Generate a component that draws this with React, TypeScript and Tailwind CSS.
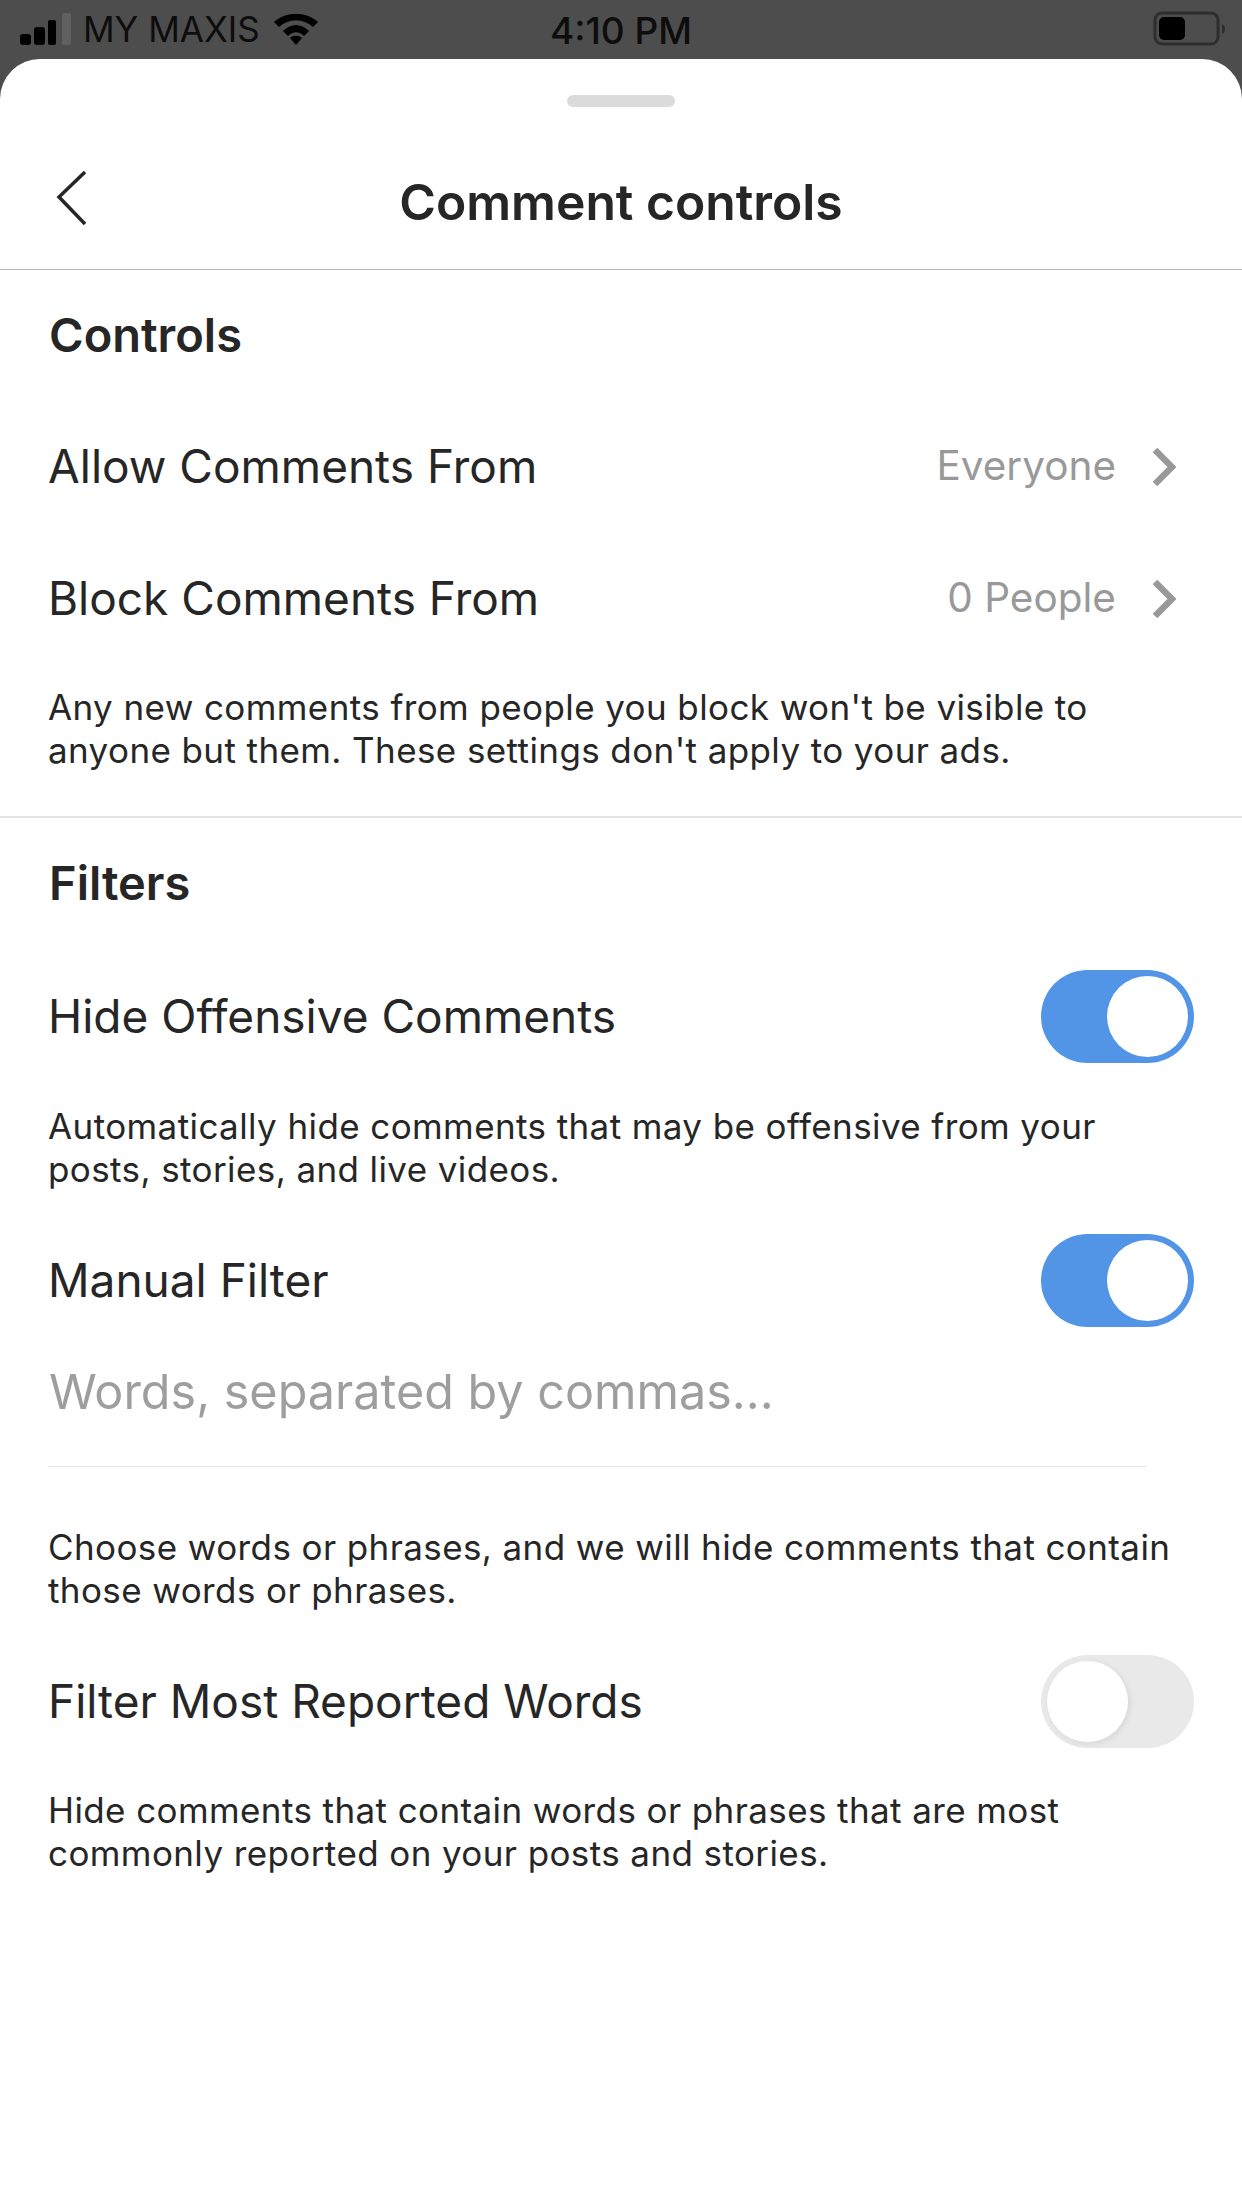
import React from "react";

const font = { fontFamily: "Inter, 'Noto Sans', sans-serif" };

const Toggle = ({ on }: { on: boolean }) => (
  <div
    className={`flex h-[93px] w-[153px] shrink-0 items-center rounded-full p-[6px] ${
      on ? "justify-end bg-[#5294e6]" : "justify-start bg-[#e9e9e9]"
    }`}
  >
    <div className={`h-[81px] w-[81px] rounded-full bg-white ${on ? "" : "shadow-[2px_2px_6px_rgba(0,0,0,0.08)]"}`} />
  </div>
);

const Chevron = () => (
  <svg width="24" height="40" viewBox="0 0 24 40" className="mt-[2px] ml-[36px] shrink-0">
    <path d="M3 3 L20 20 L3 37" fill="none" stroke="#999999" strokeWidth="6.5" />
  </svg>
);

const Help = ({ children, className = "" }: { children: React.ReactNode; className?: string }) => (
  <p className={`px-[48px] text-[35px] leading-[43px] tracking-[0.4px] text-[#262626] ${className}`}>{children}</p>
);

const Heading = ({ children, className = "" }: { children: React.ReactNode; className?: string }) => (
  <h2 className={`px-[49px] text-[47px] leading-[56px] font-semibold text-[#262626] ${className}`}>{children}</h2>
);

const LinkRow = ({ label, value, className = "" }: { label: string; value: string; className?: string }) => (
  <div className={`flex h-[60px] items-center justify-between pr-[66px] pl-[48px] ${className}`}>
    <span className="text-[46px] text-[#262626]">{label}</span>
    <span className="flex items-center">
      <span className="text-[40.5px] text-[#999999]">{value}</span>
      <Chevron />
    </span>
  </div>
);

const ToggleRow = ({ label, on, className = "" }: { label: string; on: boolean; className?: string }) => (
  <div className={`flex h-[93px] items-center justify-between pr-[48px] pl-[48px] ${className}`}>
    <span className="text-[46px] text-[#262626]">{label}</span>
    <Toggle on={on} />
  </div>
);

export default function App() {
  return (
    <div className="flex h-[2207px] w-[1242px] flex-col overflow-hidden bg-[#4d4d4d]" style={font}>
      {/* status bar */}
      <div className="relative flex h-[59px] shrink-0 items-center pl-[20px] text-[#0d0d0d]">
        <svg width="52" height="32" viewBox="0 0 52 32" className="mt-[-1px]">
          <rect x="0" y="21" width="11" height="11" rx="3" fill="#000" />
          <rect x="14" y="14" width="11" height="18" rx="3" fill="#000" />
          <rect x="28" y="7" width="8" height="25" rx="2" fill="#000" />
          <rect x="42" y="0" width="9" height="32" rx="2" fill="#606060" />
        </svg>
        <span className="ml-[11px] text-[35px] leading-none font-normal">MY MAXIS</span>
        <svg width="46" height="34" viewBox="0 0 46 34" className="mt-[-3px] ml-[13px]">
          <path d="M1 11 C13 0 33 0 45 11 L40 16 C30 7 16 7 6 16 Z" fill="#000" />
          <path d="M10 20 C18 12 28 12 36 20 L31 25 C26 20 20 20 15 25 Z" fill="#000" />
          <path d="M17 27 C20 24 26 24 29 27 L23 34 Z" fill="#000" />
        </svg>
        <span className="absolute top-[12px] left-[550px] text-[37px] leading-none font-medium">4:10 PM</span>
        <svg width="76" height="36" viewBox="0 0 76 36" className="absolute top-[11px] left-[1153px]">
          <rect x="2" y="2" width="63" height="31" rx="7" fill="none" stroke="#2e2e2e" strokeWidth="3" />
          <rect x="6" y="6" width="26" height="23" rx="5" fill="#000" />
          <path d="M69 13 C73 14 73 22 69 23 Z" fill="#2e2e2e" />
        </svg>
      </div>

      {/* sheet */}
      <div className="flex flex-1 flex-col rounded-t-[40px] bg-white">
        <div className="mx-auto mt-[36px] h-[12px] w-[108px] shrink-0 rounded-full bg-[#dbdbdb]" />

        <div className="relative flex h-[163px] shrink-0 items-center justify-center border-b-[1.5px] border-[#b5b5b5]">
          <svg width="32" height="54" viewBox="0 0 32 54" className="absolute top-[64px] left-[56px]">
            <path d="M29 1 L3 26 L29 53" fill="none" stroke="#262626" strokeWidth="3.5" />
          </svg>
          <h1 className="mt-[28px] text-[49.8px] font-semibold text-[#262626]">Comment controls</h1>
        </div>

        <Heading className="mt-[37px]">Controls</Heading>
        <LinkRow label="Allow Comments From" value="Everyone" className="mt-[73px]" />
        <LinkRow label="Block Comments From" value="0 People" className="mt-[72px]" />
        <Help className="mt-[58px]">
          Any new comments from people you block won't be visible to
          <br />
          anyone but them. These settings don't apply to your ads.
        </Help>

        <div className="mt-[44px] h-[1.5px] bg-[#e3e3e3]" />

        <Heading className="mt-[37px]">Filters</Heading>
        <ToggleRow label="Hide Offensive Comments" on className="mt-[59px]" />
        <Help className="mt-[42px]">
          Automatically hide comments that may be offensive from your
          <br />
          posts, stories, and live videos.
        </Help>
        <ToggleRow label="Manual Filter" on className="mt-[43px]" />

        <p className="mt-[35px] px-[49px] text-[48.5px] leading-[60px] text-[#9e9e9e]">Words, separated by commas...</p>
        <div className="mt-[44px] ml-[48px] h-[1.5px] w-[1098px] bg-[#e3e3e3]" />

        <Help className="mt-[59px]">
          Choose words or phrases, and we will hide comments that contain
          <br />
          those words or phrases.
        </Help>
        <ToggleRow label="Filter Most Reported Words" on={false} className="mt-[43px]" />
        <Help className="mt-[41px]">
          Hide comments that contain words or phrases that are most
          <br />
          commonly reported on your posts and stories.
        </Help>
      </div>
    </div>
  );
}
